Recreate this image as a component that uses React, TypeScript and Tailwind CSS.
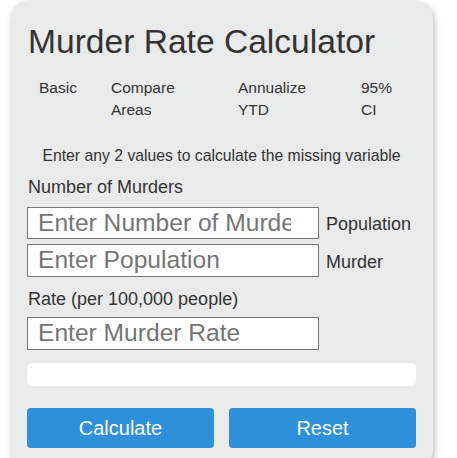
import React from "react";

const font = { fontFamily: '"Liberation Sans", Arial, sans-serif' };

export default function App() {
  return (
    <div className="w-[457px] h-[458px] overflow-hidden bg-white" style={font}>
      <div className="ml-[10px] w-[423px] rounded-[20px] bg-[#e9eaea] px-[17px] pt-[22px] pb-[22px] shadow-[2px_3px_6px_rgba(0,0,0,0.25)] text-[#333]">
        <h1 className="text-[33.6px] leading-[39px] pl-px font-normal text-[#333]">
          Murder Rate Calculator
        </h1>

        <div className="mt-[16px] ml-[12px] grid grid-cols-[72px_127px_123px_auto] text-[15.5px] leading-[22px] text-[#333]">
          <div>Basic</div>
          <div>
            Compare
            <br />
            Areas
          </div>
          <div>
            Annualize
            <br />
            YTD
          </div>
          <div>
            95%
            <br />
            CI
          </div>
        </div>

        <p className="mt-[25px] text-center text-[15.75px] leading-[20px] text-[#333]">
          Enter any 2 values to calculate the missing variable
        </p>

        <div className="mt-[10px] pl-px text-[18px] leading-[22px]">Number of Murders</div>

        <div className="mt-[9px] flex items-center gap-[7px]">
          <input
            className="w-[292px] h-[32px] border border-[#767676] bg-white pl-[10px] pr-[27px] text-[24.6px] placeholder:text-[#757575] outline-none"
            placeholder="Enter Number of Murders"
          />
          <span className="text-[18px] leading-[22px] pt-[2px]">Population</span>
        </div>
        <div className="mt-[5px] flex items-center gap-[7px]">
          <input
            className="w-[292px] h-[33px] border border-[#767676] bg-white pl-[10px] pr-[27px] text-[24.6px] placeholder:text-[#757575] outline-none"
            placeholder="Enter Population"
          />
          <span className="text-[18px] leading-[22px] pt-[2px]">Murder</span>
        </div>

        <div className="mt-[11px] pl-px text-[18px] leading-[22px]">Rate (per 100,000 people)</div>

        <div className="mt-[7px] flex">
          <input
            className="w-[292px] h-[33px] border border-[#767676] bg-white pl-[10px] pr-[27px] text-[24.6px] placeholder:text-[#757575] outline-none"
            placeholder="Enter Murder Rate"
          />
        </div>

        <div className="mt-[13px] h-[23px] rounded-[5px] bg-white" />

        <div className="mt-[22px] flex gap-[15px]">
          <button className="flex-1 h-[40px] rounded-[4px] bg-[#2d90d8] text-white text-[20px]">
            Calculate
          </button>
          <button className="flex-1 h-[40px] rounded-[4px] bg-[#2d90d8] text-white text-[20px]">
            Reset
          </button>
        </div>
      </div>
    </div>
  );
}
